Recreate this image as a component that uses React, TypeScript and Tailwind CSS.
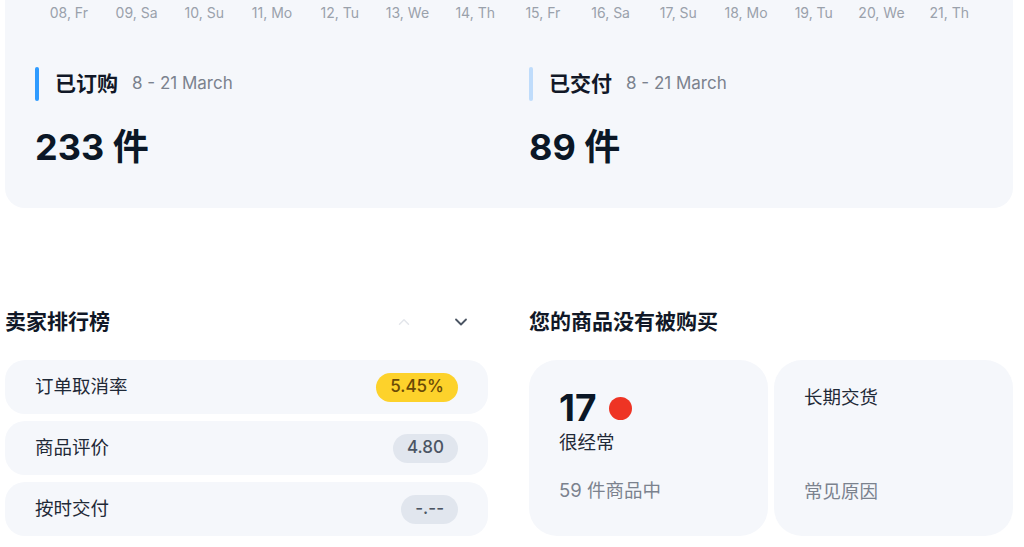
import React from 'react';

const days = [
  '08, Fr', '09, Sa', '10, Su', '11, Mo', '12, Tu', '13, We', '14, Th',
  '15, Fr', '16, Sa', '17, Su', '18, Mo', '19, Tu', '20, We', '21, Th',
];

const ratings = [
  { label: '订单取消率', value: '5.45%', pill: 'bg-[#fdd22b] text-[#6b4a06]' },
  { label: '商品评价', value: '4.80', pill: 'bg-[#e1e6ee] text-[#4b5563]' },
  { label: '按时交付', value: '-.--', pill: 'bg-[#e1e6ee] text-[#4b5563]' },
];

const Stat: React.FC<{ title: string; value: string; bar: string; className?: string }> = ({
  title,
  value,
  bar,
  className,
}) => (
  <div className={className}>
    <div className="flex items-center h-[34px]">
      <div className={`w-[4px] h-[34px] rounded-full ${bar}`} />
      <span className="ml-[16px] text-[21px] font-bold text-[#111827]">{title}</span>
      <span className="ml-[14px] text-[17px] text-[#7b828e]">8 - 21 March</span>
    </div>
    <div className="mt-[23px] text-[36px] leading-[46px] font-bold text-[#0b1726]">{value}</div>
  </div>
);

export default function App() {
  return (
    <div
      className="w-[1024px] h-[547px] bg-white overflow-hidden"
      style={{ fontFamily: 'Inter, "Noto Sans CJK SC", sans-serif' }}
    >
      <div className="ml-[5px] w-[1008px] h-[208px] bg-[#f5f7fb] rounded-b-[20px] px-[30px]">
        <div className="flex h-[24px] items-center">
          {days.map((d) => (
            <div key={d} className="flex-1 text-center text-[14px] text-[#9aa1ab]">
              {d}
            </div>
          ))}
        </div>
        <div className="flex pt-[43px]">
          <Stat className="w-[494px]" title="已订购" value="233 件" bar="bg-[#2f9bff]" />
          <Stat className="flex-1" title="已交付" value="89 件" bar="bg-[#bfdcfb]" />
        </div>
      </div>

      <div className="ml-[5px] w-[1008px] flex mt-[97px] gap-[41px]">
        <div className="w-[483px] shrink-0">
          <div className="flex items-center h-[34px]">
            <span className="text-[21px] font-bold text-[#111827]">卖家排行榜</span>
            <div className="ml-auto flex items-center gap-[38px] mr-[17px]">
              <svg width="18" height="18" viewBox="0 0 24 24" fill="none" stroke="#e3e6eb" strokeWidth="2" strokeLinecap="round" strokeLinejoin="round">
                <path d="M6 15l6-6 6 6" />
              </svg>
              <svg width="20" height="20" viewBox="0 0 24 24" fill="none" stroke="#4b5563" strokeWidth="2.2" strokeLinecap="round" strokeLinejoin="round">
                <path d="M6 9l6 6 6-6" />
              </svg>
            </div>
          </div>
          <div className="mt-[21px] flex flex-col gap-[7px]">
            {ratings.map((r) => (
              <div key={r.label} className="h-[54px] bg-[#f5f7fb] rounded-[20px] flex items-center px-[30px]">
                <span className="text-[18.5px] text-[#1f2937]">{r.label}</span>
                <span className={`ml-auto h-[29px] px-[14px] rounded-full flex items-center text-[17px] font-medium ${r.pill}`}>
                  {r.value}
                </span>
              </div>
            ))}
          </div>
        </div>

        <div className="flex-1">
          <div className="flex items-center h-[34px]">
            <span className="text-[21px] font-bold text-[#111827]">您的商品没有被购买</span>
          </div>
          <div className="mt-[21px] flex gap-[6px]">
            <div className="flex-1 h-[176px] bg-[#f5f7fb] rounded-[28px] pl-[30px] pt-[26px] flex flex-col">
              <div className="flex items-center">
                <span className="text-[37px] leading-[44px] font-bold text-[#0b1726]">17</span>
                <span className="ml-[13px] w-[23px] h-[23px] rounded-full bg-[#ee3424]" />
              </div>
              <span className="text-[18.5px] text-[#1f2937] leading-[24px]">很经常</span>
              <span className="mt-[23px] text-[18.5px] text-[#7b828e]">59 件商品中</span>
            </div>
            <div className="flex-1 h-[176px] bg-[#f5f7fb] rounded-[28px] pl-[30px] pt-[25px] flex flex-col">
              <span className="text-[18.5px] text-[#1f2937] leading-[24px]">长期交货</span>
              <span className="mt-[69px] text-[18.5px] text-[#7b828e]">常见原因</span>
            </div>
          </div>
        </div>
      </div>
    </div>
  );
}
